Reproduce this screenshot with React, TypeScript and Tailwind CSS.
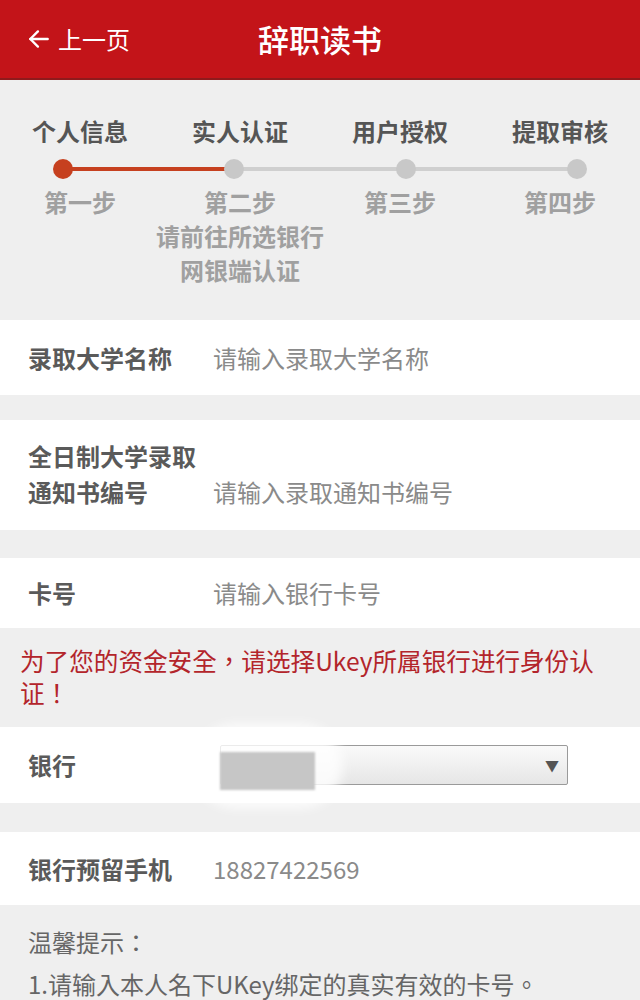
import React from "react";

const font = { fontFamily: '"Noto Sans CJK SC", "Noto Sans", sans-serif' };
const fontTC = { fontFamily: '"Noto Sans CJK TC", "Noto Sans CJK SC", sans-serif' };

function Row({ label, value, h }: { label: React.ReactNode; value: React.ReactNode; h: string }) {
  return (
    <div className={`bg-white flex items-center px-[28px] ${h}`}>
      <div className="w-[185px] shrink-0 text-[24px] leading-[36px] font-bold text-[#5a5a5a]">{label}</div>
      <div className="text-[24px] leading-[36px] text-[#8a8a8a]">{value}</div>
    </div>
  );
}

export default function App() {
  const steps = [
    { t: "个人信息", s: "第一步" },
    { t: "实人认证", s: "第二步", extra: ["请前往所选银行", "网银端认证"] },
    { t: "用户授权", s: "第三步" },
    { t: "提取审核", s: "第四步" },
  ];
  return (
    <div className="w-[640px] h-[1000px] overflow-hidden bg-[#efefef]" style={font}>
      {/* header */}
      <div className="h-[80px] bg-[#c31419] border-b-2 border-[#8f1a1c] relative flex items-center">
        <div className="flex items-center pl-[26px] text-white text-[24px] leading-none">
          <svg width="26" height="26" viewBox="0 0 24 24" fill="none" stroke="white" strokeWidth="2.2" strokeLinecap="round" strokeLinejoin="round">
            <path d="M20 12H4" />
            <path d="M11 5l-7 7 7 7" />
          </svg>
          <span className="ml-[6px]">上一页</span>
        </div>
        <div className="absolute inset-0 flex items-center justify-center text-white text-[31px] font-medium pointer-events-none">
          辞职读书
        </div>
      </div>

      {/* steps */}
      <div className="pt-[33px] pb-[33px]">
        <div className="grid grid-cols-4">
          {steps.map((s) => (
            <div key={s.t} className="text-center text-[24px] leading-[36px] font-bold text-[#555]">
              {s.t}
            </div>
          ))}
        </div>
        <div className="relative h-[20px] mt-[10px] px-[53px] flex items-center justify-between">
          <div className="absolute left-[63px] right-[63px] top-[8px] h-[4px] bg-[#cfcfcf]" />
          <div className="absolute left-[63px] w-[171px] top-[8px] h-[4px] bg-[#c6401f]" />
          <div className="relative w-[20px] h-[20px] rounded-full bg-[#c6401f]" />
          <div className="relative w-[20px] h-[20px] rounded-full bg-[#c8c8c8]" />
          <div className="relative w-[20px] h-[20px] rounded-full bg-[#c8c8c8]" />
          <div className="relative w-[20px] h-[20px] rounded-full bg-[#c8c8c8]" />
        </div>
        <div className="grid grid-cols-4 mt-[6px]">
          {steps.map((s) => (
            <div key={s.s} className="flex flex-col items-center text-[24px] leading-[34px] font-bold text-[#a0a0a0]">
              <div className="whitespace-nowrap">{s.s}</div>
              {s.extra && s.extra.map((e) => <div key={e} className="whitespace-nowrap">{e}</div>)}
            </div>
          ))}
        </div>
      </div>

      <Row label="录取大学名称" value="请输入录取大学名称" h="h-[75px]" />
      <div className="h-[25px]" />
      <div className="bg-white h-[110px] flex items-end px-[28px] pb-[20px]">
        <div className="w-[185px] shrink-0 text-[24px] leading-[36px] font-bold text-[#5a5a5a]">
          <div>全日制大学录取</div>
          <div>通知书编号</div>
        </div>
        <div className="text-[24px] leading-[36px] text-[#8a8a8a]">请输入录取通知书编号</div>
      </div>
      <div className="h-[28px]" />
      <Row label="卡号" value="请输入银行卡号" h="h-[70px]" />

      <div className="pt-[16px] pb-[19px] pl-[20px] pr-[30px] text-[24.6px] leading-[32px] text-[#b3252b]" style={fontTC}>
        为了您的资金安全，请选择Ukey所属银行进行身份认证！
      </div>

      <div className="bg-white h-[76px] flex items-center px-[28px]">
        <div className="w-[185px] shrink-0 text-[24px] leading-[36px] font-bold text-[#5a5a5a]">银行</div>
        <div className="relative ml-[7px] w-[348px] h-[40px] border border-[#9a9a9a] rounded-[2px] bg-gradient-to-b from-[#fafafa] to-[#e6e6e6] flex items-center justify-end pr-[8px]">
          <div className="absolute -left-[28px] -top-[22px] w-[150px] h-[84px] rounded-full bg-white/80 blur-[6px]" />
          <div className="absolute -left-px top-[6px] w-[95px] h-[38px] bg-[#c6c6c6] blur-[1px]" />
          <span className="relative text-[14px] text-[#555]">▼</span>
        </div>
      </div>
      <div className="h-[29px]" />
      <Row label="银行预留手机" value="18827422569" h="h-[73px]" />

      <div className="pt-[17px] px-[28px] text-[24px] text-[#666]" style={fontTC}>
        <div className="leading-[40px]">温馨提示：</div>
        <div className="leading-[44px] whitespace-nowrap">1.请输入本人名下UKey绑定的真实有效的卡号。</div>
      </div>
    </div>
  );
}
